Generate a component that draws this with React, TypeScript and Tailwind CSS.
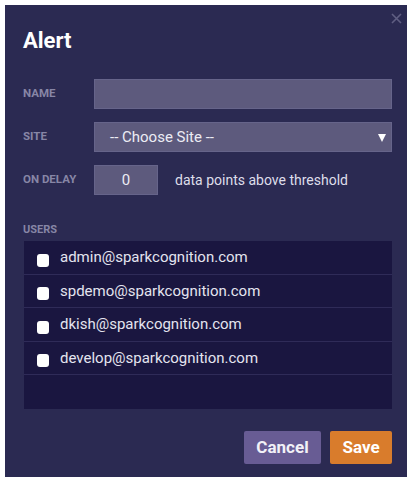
import React from "react";

const users = [
  "admin@sparkcognition.com",
  "spdemo@sparkcognition.com",
  "dkish@sparkcognition.com",
  "develop@sparkcognition.com",
];

function FieldLabel({ children }: { children: React.ReactNode }) {
  return (
    <div className="w-[71px] shrink-0 text-[11.5px] font-bold uppercase text-[#8786a6]">
      {children}
    </div>
  );
}

export default function App() {
  return (
    <div
      className="w-[408px] h-[478px] bg-white pl-[5px] pt-[5px] overflow-hidden"
      style={{ fontFamily: "Roboto, 'Liberation Sans', sans-serif" }}
    >
      <div className="relative w-[402px] h-[472px] bg-[#2b2a52] pl-[18px] pr-[15px] pt-[22px]">
        {/* close button */}
        <button className="absolute right-[5px] top-[8px] w-[11px] h-[11px] text-[#5f5e82]">
          <svg viewBox="0 0 11 11" width="11" height="11" fill="none" stroke="currentColor" strokeWidth="1.6">
            <path d="M1 1 L10 10 M10 1 L1 10" />
          </svg>
        </button>

        <h2 className="text-[22px] leading-[28px] font-bold text-white">Alert</h2>

        <div className="mt-[24px] flex flex-col gap-[13px]">
          <div className="flex items-center">
            <FieldLabel>Name</FieldLabel>
            <div className="h-[30px] flex-1 bg-[#5d5a7d] border border-[#66648a]" />
          </div>

          <div className="flex items-center">
            <FieldLabel>Site</FieldLabel>
            <div className="relative h-[30px] flex-1 bg-[#5d5a7d] border border-[#66648a] flex items-center pl-[15px] text-[15px] text-[#ececf4]">
              -- Choose Site --
              <svg className="absolute right-[5px] top-[11px]" width="8" height="8" viewBox="0 0 8 8">
                <path d="M0 0 H8 L4 8 Z" fill="#ffffff" />
              </svg>
            </div>
          </div>

          <div className="flex items-center">
            <FieldLabel>On Delay</FieldLabel>
            <div className="h-[30px] w-[64px] bg-[#5d5a7d] border border-[#66648a] flex items-center justify-center text-[15px] text-[#ececf4]">
              0
            </div>
            <span className="ml-[17px] text-[14px] text-[#dedeea]">data points above threshold</span>
          </div>
        </div>

        <div className="mt-[29px] text-[11px] font-bold uppercase text-[#8786a6] leading-[12px]">Users</div>

        <div className="mt-[5px] ml-[1px] h-[168px] bg-[#1a1640]">
          {users.map((u) => (
            <div key={u} className="h-[33.5px] flex items-center border-b border-[#2f2b58] pl-[13px]">
              <span className="mt-[6px] w-[12px] h-[13px] rounded-[3px] bg-white shrink-0" />
              <span className="ml-[11px] text-[15px] text-[#e4e4ef]">{u}</span>
            </div>
          ))}
        </div>

        <div className="mt-[22px] flex justify-end gap-[9px]">
          <button className="h-[33px] w-[77px] rounded-[2px] bg-[#685c94] text-[17px] font-bold text-[#f2f1f7]">
            Cancel
          </button>
          <button className="h-[33px] w-[62px] rounded-[2px] bg-[#d97c2c] text-[17px] font-bold text-white">
            Save
          </button>
        </div>
      </div>
    </div>
  );
}
